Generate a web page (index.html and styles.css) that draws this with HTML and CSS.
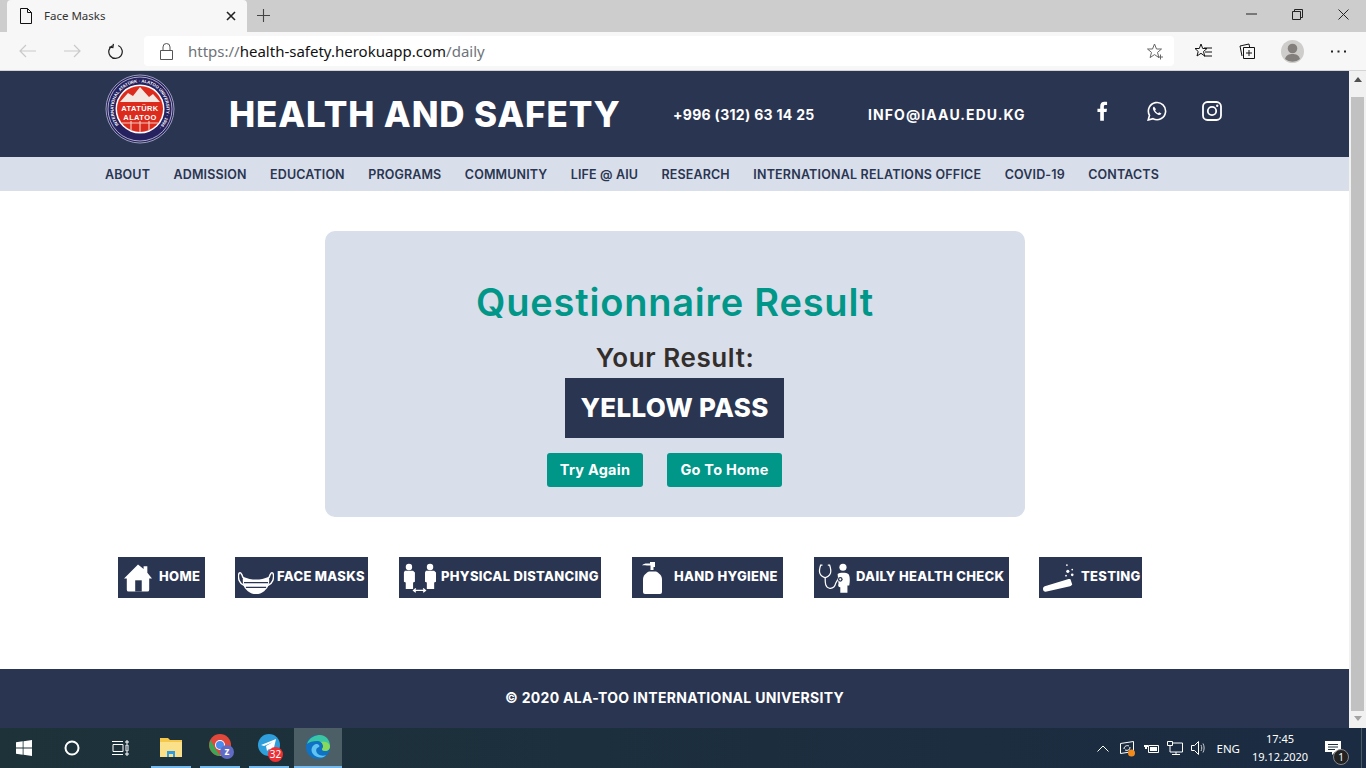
FILE: index.html
```html
<!DOCTYPE html>
<html lang="en">

<head>
  <meta charset="UTF-8">
  <title>Face Masks</title>
  <link rel="stylesheet" href="styles.css">
</head>

<body>
  <!-- browser frame -->
  <div class="tabstrip">
    <div class="tab">
      <svg class="tab-doc" width="14" height="16" viewBox="0 0 14 16"><path d="M1.5.5h7l4 4v11h-11zM8.5.5v4h4" fill="none" stroke="#111" stroke-width="1"/></svg>
      <span class="tab-title">Face Masks</span>
      <svg class="tab-x" width="10" height="10" viewBox="0 0 10 10"><path d="M1 1l8 8M9 1l-8 8" stroke="#222" stroke-width="1.6"/></svg>
    </div>
    <svg class="tab-new" width="13" height="13" viewBox="0 0 13 13"><path d="M6.500 0v13M0 6.500h13" stroke="#444" stroke-width="1.1"/></svg>
    <div class="win-btns">
      <svg width="11" height="2" viewBox="0 0 11 2"><path d="M0 1h11" stroke="#222" stroke-width="1"/></svg>
      <svg width="11" height="11" viewBox="0 0 11 11"><path d="M.5 2.500h8v8h-8zM2.500 2.500v-2h8v8h-2" fill="none" stroke="#222" stroke-width="1"/></svg>
      <svg width="11" height="11" viewBox="0 0 11 11"><path d="M.5.5l10 10M10.500.5l-10 10" stroke="#222" stroke-width="1"/></svg>
    </div>
  </div>
  <div class="toolbar">
    <svg class="nav-back" width="18" height="14" viewBox="0 0 18 14"><path d="M17 7H1M7 1L1 7l6 6" fill="none" stroke="#c9c9c9" stroke-width="1.2"/></svg>
    <svg class="nav-fwd" width="18" height="14" viewBox="0 0 18 14"><path d="M1 7h16M11 1l6 6-6 6" fill="none" stroke="#c9c9c9" stroke-width="1.2"/></svg>
    <svg class="nav-reload" width="16" height="17" viewBox="0 0 18 18"><path d="M11.500 2.300A7.600 7.600 0 1 1 5.200 2.400" fill="none" stroke="#222" stroke-width="1.400"/><path d="M5.700.2v4.400H1.600" fill="none" stroke="#222" stroke-width="1.400" transform="rotate(8 5 3)"/></svg>
    <div class="addressbar">
      <svg class="lock" width="13" height="17" viewBox="0 0 13 17"><path d="M.5 7.500h12v9H.5zM3 7.500V4a3.500 3.500 0 0 1 7 0v3.500" fill="none" stroke="#555" stroke-width="1"/></svg>
      <span class="url"><span class="url-dim">https://</span>health-safety.herokuapp.com<span class="url-dim">/daily</span></span>
      <svg class="star" width="17" height="17" viewBox="0 0 17 17"><path d="M7.500 1l2 5h5l-4 3.400 1.400 5.200-4.400-3-4.400 3L4.500 9.400.5 6h5z" fill="none" stroke="#666" stroke-width="1"/><path d="M13.500 11.500v5M11 14h5" stroke="#666" stroke-width="1"/></svg>
    </div>
    <svg class="tool-fav" width="19" height="17" viewBox="0 0 19 17"><path d="M7 1l1.700 4.500H13L9.500 8.500l1.200 4.500L7 10.300 3 13l1.200-4.500L1 5.500h4.300z" fill="none" stroke="#111" stroke-width="1"/><path d="M10 5h8M11 9h7M10 13h8" stroke="#111" stroke-width="1"/></svg>
    <svg class="tool-coll" width="16" height="17" viewBox="0 0 16 17"><path d="M3 13L1 3l9-2 .6 3" fill="none" stroke="#111" stroke-width="1"/><path d="M4.500 4.500h11v11h-11zM10 7v6M7 10h6" fill="none" stroke="#111" stroke-width="1"/></svg>
    <svg class="tool-user" width="23" height="23" viewBox="0 0 23 23"><circle cx="11.500" cy="11.500" r="11.500" fill="#cfcdcb"/><circle cx="11.500" cy="8.500" r="4.800" fill="#837f7c"/><path d="M4 19c1-4 4-5 7.500-5s6.500 1 7.500 5a11.500 11.500 0 0 1-15 0z" fill="#837f7c"/></svg>
    <svg class="tool-more" width="15" height="3" viewBox="0 0 15 3"><path d="M0 .5h2v2H0zM6.500 .5h2v2h-2zM13 .5h2v2h-2z" fill="#222"/></svg>
  </div>

  <div class="viewport">
    <div class="page">
      <header class="site-head">
        <svg class="logo" width="70" height="70" viewBox="0 0 70 70">
          <circle cx="35" cy="35" r="34" fill="#26215f" stroke="#b9bdd6" stroke-width=".8"/>
          <circle cx="35" cy="35" r="32" fill="none" stroke="#e8e8f0" stroke-width=".7"/>
          <circle cx="35" cy="35" r="24.500" fill="#fff"/>
          <circle cx="35" cy="35" r="23" fill="#dc2a1c"/>
          <path d="M15 28l8-9 5 3 7-9 9 10 4-3 7 8z" fill="#f4e6e0"/>
          <path d="M17 49h36M35 47v11M26 47v9M44 47v9" stroke="#f2c9bf" stroke-width="1.200"/>
          <defs><path id="ring" d="M35 35m-26.500 0a26.500 26.500 0 1 1 53 0a26.500 26.500 0 1 1-53 0" transform="rotate(-40 35 35)"/></defs>
          <text class="logo-ring"><textPath href="#ring" startOffset="1%">INTERNATIONAL ATATÜRK · ALATOO UNIVERSITY · 1996 ·</textPath></text>
          <text class="logo-word" x="35" y="37">ATATÜRK</text>
          <text class="logo-word" x="35" y="46">ALATOO</text>
        </svg>
        <span class="site-title">HEALTH AND SAFETY</span>
        <span class="site-phone">+996 (312) 63 14 25</span>
        <span class="site-mail">INFO@IAAU.EDU.KG</span>
        <div class="socials">
          <svg class="soc-fb" width="11" height="20" viewBox="0 0 12 21"><path d="M3.500 21v-9.500H.5V8h3V5.300C3.500 2 5.400.5 8 .5c1.300 0 2.500.1 3 .2v3.200H9.200C7.800 3.900 7.500 4.600 7.500 5.600V8h3.400l-.5 3.500H7.500V21z" fill="#fff"/></svg>
          <svg width="20" height="20" viewBox="0 0 20 20"><path d="M1.200 19l1.300-4.700A8.600 8.600 0 1 1 6 17.700z" fill="none" stroke="#fff" stroke-width="1.600"/><path d="M7 5.500c-.7.400-1.400 1.300-1 2.800.6 2.300 3.200 5 5.600 5.600 1.400.3 2.500-.3 2.800-1.300l-2.300-1.400-1 1c-1.300-.5-2.500-1.700-3-3l.9-1z" fill="#fff"/></svg>
          <svg width="20" height="20" viewBox="0 0 20 20"><rect x="1" y="1" width="18" height="18" rx="4.500" fill="none" stroke="#fff" stroke-width="1.800"/><circle cx="10" cy="10" r="4.200" fill="none" stroke="#fff" stroke-width="1.800"/><circle cx="15.200" cy="4.800" r="1.200" fill="#fff"/></svg>
        </div>
      </header>
      <nav class="site-nav">
        <a>ABOUT</a>
        <a>ADMISSION</a>
        <a>EDUCATION</a>
        <a>PROGRAMS</a>
        <a>COMMUNITY</a>
        <a>LIFE @ AIU</a>
        <a>RESEARCH</a>
        <a class="nav-long">INTERNATIONAL RELATIONS OFFICE</a>
        <a>COVID-19</a>
        <a>CONTACTS</a>
      </nav>

      <main class="content">
        <section class="result-card">
          <h1>Questionnaire Result</h1>
          <h2>Your Result:</h2>
          <div class="pass">YELLOW PASS</div>
          <div class="actions">
            <a class="btn btn-try">Try Again</a>
            <a class="btn btn-home">Go To Home</a>
          </div>
        </section>

        <div class="topics">
          <a class="topic t-home">
            <svg width="28" height="29" viewBox="0 0 30 30"><path d="M15 1l6 5V3h4v7l5 6h-3v12a2 2 0 0 1-2 2H5a2 2 0 0 1-2-2V16H0z" fill="#fff"/><path d="M12 18h7v12h-7z" fill="#2a3551"/></svg>
            <span>HOME</span>
          </a>
          <a class="topic t-mask">
            <svg width="36" height="25" viewBox="0 4 37 26"><path d="M5 12C2 2-1 8 1 15c1 3 3 4 5 5M32 12c3-10 6-4 4 3-1 3-3 4-5 5" fill="none" stroke="#fff" stroke-width="1.500"/><path d="M5 11c5 2 9 3 13.500 3S27 13 32 11c1 8-1 12-5 15-3 2-5 3-8.500 3s-5.500-1-8.500-3c-4-3-6-7-5-15z" fill="#fff"/><path d="M6 17h25M8 22h21" stroke="#2a3551" stroke-width="1.300"/></svg>
            <span>FACE MASKS</span>
          </a>
          <a class="topic t-dist">
            <svg width="33" height="30" viewBox="0 0 36 32"><circle cx="6.500" cy="4" r="3.500" fill="#fff"/><path d="M2 8h9l2 2v10l-2 1v7H3v-7l-2-1V10z" fill="#fff"/><circle cx="29.500" cy="4" r="3.500" fill="#fff"/><path d="M25 8h9l2 2v10l-2 1v7h-8v-7l-2-1V10z" fill="#fff"/><path d="M12 29.500h12M14 27.500l-2.500 2 2.500 2M22 27.500l2.500 2-2.500 2" fill="none" stroke="#fff" stroke-width="1.400"/></svg>
            <span>PHYSICAL DISTANCING</span>
          </a>
          <a class="topic t-hand">
            <svg width="21" height="32" viewBox="0 0 21 32"><path d="M0 3.500c1-1.500 3-2 5-2h3V0h5v5h-1.500v3h-3V3.500H5C3 3.500 1 3 0 3.500z" fill="#fff"/><path d="M7 9.500h7c3 1.500 6 4 6 8V30a2 2 0 0 1-2 2H3a2 2 0 0 1-2-2V17.500c0-4 3-6.500 6-8z" fill="#fff"/></svg>
            <span>HAND HYGIENE</span>
          </a>
          <a class="topic t-daily">
            <svg width="33" height="30" viewBox="0 0 37 33"><path d="M5 2H3c-1 3-2 6-1 9 1 3 4 5 6 5s5-2 6-5c1-3 0-6-1-9h-2" fill="none" stroke="#fff" stroke-width="1.400"/><path d="M8 16c0 6 0 11 5 12 4 .5 6-2 7-6l3-5" fill="none" stroke="#fff" stroke-width="1.400"/><circle cx="28" cy="4.500" r="4" fill="#fff"/><path d="M22 12c2-2 10-2 12 0 2 2 2 8 1 13h-2v8h-8v-6c-2 0-3-2-2-4z" fill="#fff"/><circle cx="25" cy="18" r="2.600" fill="#2a3551"/><circle cx="25" cy="18" r="1.200" fill="#fff"/></svg>
            <span>DAILY HEALTH CHECK</span>
          </a>
          <a class="topic t-test">
            <svg width="31" height="31" viewBox="0 0 35 32"><path d="M3 32c-3.500 0-4-5-1-6l26-8c1-.5 2-.5 3 0l2 6c-.5 1-1.500 1.500-2.500 2z" fill="#fff"/><circle cx="27" cy="2" r="1" fill="#fff"/><circle cx="28" cy="9" r="1.800" fill="#fff"/><circle cx="33" cy="7" r="1" fill="#fff"/><circle cx="33" cy="13" r="1.500" fill="#fff"/><circle cx="26" cy="14" r="1" fill="#fff"/></svg>
            <span>TESTING</span>
          </a>
        </div>
      </main>

      <footer class="site-foot">© 2020 ALA-TOO INTERNATIONAL UNIVERSITY</footer>
    </div>
    <div class="scrollbar">
      <span class="arrow-up"></span>
      <span class="thumb"></span>
      <span class="arrow-down"></span>
    </div>
  </div>

  <!-- windows taskbar -->
  <div class="taskbar">
    <svg class="tb-win" width="16" height="16" viewBox="0 0 16 16"><path d="M0 2.300l6.700-1v6.300H0zM7.500 1.200L16 0v7.600H7.500zM0 8.400h6.700v6.300L0 13.700zM7.500 8.400H16V16l-8.500-1.200z" fill="#fff"/></svg>
    <svg class="tb-search" width="16" height="16" viewBox="0 0 16 16"><circle cx="8" cy="8" r="6.500" fill="none" stroke="#fff" stroke-width="2"/></svg>
    <svg class="tb-view" width="17" height="16" viewBox="0 0 17 16"><path d="M1 4.500h10v7H1zM0 1.500h11M0 14.500h11M14 1h2v2h-2zM14 5h2v6h-2zM14 13h2v2h-2z" fill="none" stroke="#fff" stroke-width="1"/></svg>
    <div class="tb-app">
      <svg width="22" height="20" viewBox="0 0 22 20"><path d="M0 1h8l2 2h12v17H0z" fill="#f5c84c"/><path d="M0 5h22v15H0z" fill="#fbe08a"/><path d="M7 14h8v6h-2v-3H9v3H7z" fill="#2f9be0"/></svg>
    </div>
    <div class="tb-app">
      <svg class="tb-shift" width="26" height="26" viewBox="0 0 26 26"><circle cx="11" cy="11" r="11" fill="#e0483b"/><path d="M1.500 6l5 9 5 7a11 11 0 0 1-10-16z" fill="#3aa757"/><path d="M11 22l5-9h5a11 11 0 0 1-10 9z" fill="#f6c026"/><circle cx="11" cy="11" r="5" fill="#fff"/><circle cx="11" cy="11" r="4" fill="#4a8cf0"/><circle cx="18" cy="18" r="7" fill="#5f6bc4"/><text class="tb-z" x="18" y="21">z</text></svg>
    </div>
    <div class="tb-app">
      <svg class="tb-shift" width="26" height="26" viewBox="0 0 26 26"><circle cx="11" cy="11" r="11" fill="#2f9fdc"/><path d="M3 11l15-6-3 13-4-3-2 2-1-5 7-4-9 4z" fill="#fff"/></svg>
      <span class="tb-badge">32</span>
    </div>
    <div class="tb-app tb-active">
      <svg width="24" height="24" viewBox="0 0 24 24"><circle cx="12" cy="12" r="12" fill="#0f72c4"/><path d="M1 9C3 2 10 0 14 0c6 0 10 5 10 11 0 3-2 5-5 5-2 0-3-1-3-2 1-1 1-2 1-3 0-3-3-5-6-5-4 0-8 1-10 3z" fill="#39c6a5"/><path d="M24 11c0 3-2 5-5 5-2 0-3-1-3-2 1-1 1-2 1-3 0-2-1-3-2-4 4-1 8 0 9 4z" fill="#86d95a"/><path d="M7 19c-3-4-1-9 3-10 3 0 4 2 3 3-3 1-4 4-1 7 2 2 6 2 8 1-3 4-10 3-13-1z" fill="#5fc4f0"/></svg>
    </div>
    <div class="tray">
      <svg class="tr-chev" width="12" height="7" viewBox="0 0 12 7"><path d="M.5 6.500L6 1l5.500 5.500" fill="none" stroke="#fff" stroke-width="1"/></svg>
      <svg class="tr-sync" width="17" height="17" viewBox="0 0 17 17"><path d="M1.500 3.500l13-2v10l-13 2z" fill="none" stroke="#fff" stroke-width="1"/><path d="M5 9c0-3 3-4 5-3M11 7c0 3-2 4-5 3" fill="none" stroke="#fff" stroke-width="1"/><circle cx="12.500" cy="13" r="3.500" fill="#f28a1e"/></svg>
      <svg class="tr-batt" width="17" height="12" viewBox="0 0 17 12"><path d="M5.500 3.500h10v7h-10z" fill="none" stroke="#fff" stroke-width="1"/><path d="M7 5h7v4H7zM2 0v3M4 0v3M1 3h4v2H4v2H2V5H1z" fill="#fff"/></svg>
      <svg class="tr-net" width="16" height="14" viewBox="0 0 16 14"><path d="M.5 4.500V.5h5v4zM5.500 2h10v9H3V4.500M9 11v2.500M5 13.500h8" fill="none" stroke="#fff" stroke-width="1"/></svg>
      <svg class="tr-vol" width="15" height="14" viewBox="0 0 15 14"><path d="M.5 4.500h3l4-4v13l-4-4h-3z" fill="none" stroke="#fff" stroke-width="1"/><path d="M10 4c1 2 1 4 0 6M12 2.500c1.500 3 1.500 6 0 9" fill="none" stroke="#ccc" stroke-width="1"/></svg>
      <span class="tr-lang">ENG</span>
      <div class="tr-clock"><span>17:45</span><span>19.12.2020</span></div>
      <div class="tr-notif">
        <svg width="16" height="14" viewBox="0 0 16 14"><path d="M0 0h16v11h-6l-3 3v-3H0z" fill="#fff"/><path d="M3 3.500h10M3 6h10M3 8.500h7" stroke="#1c2f3c" stroke-width="1"/></svg>
        <span class="tr-count">1</span>
      </div>
      <span class="show-desktop"></span>
    </div>
  </div>
</body>

</html>
```

FILE: styles.css
```css
* {
  box-sizing: border-box;
}

html,
body {
  margin: 0;
  height: 768px;
  overflow: hidden;
}

body {
  display: flex;
  flex-direction: column;
  font-family: "Inter", "Liberation Sans", sans-serif;
  background: #fff;
}

svg {
  display: block;
  flex: none;
}

/* browser frame */
.tabstrip {
  height: 32px;
  display: flex;
  align-items: flex-start;
  padding-left: 7px;
  background: #cdcdcd;
}

.tab {
  width: 240px;
  height: 32px;
  display: flex;
  align-items: center;
  padding: 0 11px 0 12px;
  border-radius: 4px 4px 0 0;
  background: #f7f7f7;
}

.tab-title {
  flex: 1;
  margin: -1px 0 0 11px;
  color: #333;
  font: 11.5px "Noto Sans", sans-serif;
}

.tab-new {
  margin: 9px 0 0 10px;
}

.win-btns {
  width: 120px;
  height: 28px;
  margin-left: auto;
  display: flex;
  align-items: center;
  gap: 35px;
}

.toolbar {
  height: 39px;
  display: flex;
  align-items: center;
  background: #f7f7f7;
  border-bottom: 1px solid #d4d4d4;
}

.nav-back {
  margin-left: 19px;
}

.nav-fwd {
  margin-left: 26px;
}

.nav-reload {
  margin-left: 27px;
}

.addressbar {
  width: 1030px;
  height: 30px;
  margin-left: 20px;
  display: flex;
  align-items: center;
  padding: 0 10px 0 16px;
  border-radius: 4px;
  background: #fff;
}

.url {
  flex: 1;
  margin-left: 15px;
  color: #111;
  font: 15px "Noto Sans", sans-serif;
}

.url-dim {
  color: #6e7479;
}

.tool-fav {
  margin-left: 20px;
}

.tool-coll {
  margin-left: 26px;
}

.tool-user {
  margin-left: 26px;
}

.tool-more {
  margin-left: 27px;
}

.viewport {
  flex: 1;
  min-height: 0;
  display: flex;
}

.page {
  flex: 1;
  min-width: 0;
  display: flex;
  flex-direction: column;
}

.scrollbar {
  width: 17px;
  display: flex;
  flex-direction: column;
  align-items: center;
  background: #f1f1f1;
}

.arrow-up {
  margin-top: 6px;
  border: 4px solid transparent;
  border-top: 0;
  border-bottom: 5px solid #505050;
}

.thumb {
  width: 13px;
  height: 614px;
  margin-top: 15px;
  background: #c1c1c1;
}

.arrow-down {
  margin-top: 5px;
  border: 4px solid transparent;
  border-bottom: 0;
  border-top: 5px solid #a3a3a3;
}

/* site header */
.site-head {
  height: 86px;
  display: flex;
  align-items: flex-start;
  padding-left: 105px;
  color: #fff;
  background: #2a3551;
}

.logo {
  margin-top: 3px;
}

.logo-ring {
  fill: #fff;
  font: 700 4.3px "Liberation Sans", sans-serif;
}

.logo-word {
  fill: #fff;
  text-anchor: middle;
  letter-spacing: .4px;
  font: 700 7.5px "Liberation Sans", sans-serif;
}

.site-title {
  width: 444px;
  margin: 21px 0 0 54px;
  font-size: 35px;
  line-height: 44px;
  font-weight: 800;
  letter-spacing: .88px;
  white-space: nowrap;
}

.site-phone {
  width: 195px;
  margin-top: 34px;
  font-size: 14px;
  line-height: 20px;
  font-weight: 700;
  letter-spacing: .3px;
}

.site-mail {
  width: 226px;
  margin-top: 34px;
  font-size: 14px;
  line-height: 20px;
  font-weight: 700;
  letter-spacing: 1.1px;
}

.socials {
  display: flex;
  align-items: center;
  gap: 35px;
  margin-top: 30px;
  padding-left: 3px;
}

.soc-fb {
  margin-right: 4px;
}

.site-nav {
  height: 34px;
  display: flex;
  align-items: center;
  gap: 23.5px;
  padding-left: 105px;
  color: #2a3551;
  background: #d8deea;
  font-size: 12.5px;
  font-weight: 600;
  letter-spacing: .125px;
  white-space: nowrap;
}

.nav-long {
  letter-spacing: .2px;
}

/* main */
.content {
  flex: 1;
  min-height: 0;
  padding-top: 40px;
}

.result-card {
  width: 700px;
  height: 286px;
  margin-left: 325px;
  padding-top: 47px;
  display: flex;
  flex-direction: column;
  align-items: center;
  border-radius: 10px;
  background: #d8deea;
}

.result-card h1 {
  margin: 0;
  color: #009688;
  font-size: 38px;
  line-height: 48px;
  font-weight: 600;
  letter-spacing: .8px;
}

.result-card h2 {
  margin: 14px 0 0;
  color: #332e2b;
  font-size: 26px;
  line-height: 36px;
  font-weight: 600;
  letter-spacing: .6px;
}

.pass {
  width: 219px;
  height: 60px;
  margin: 2px 1px 0 0;
  display: flex;
  align-items: center;
  justify-content: center;
  padding-bottom: 2px;
  color: #fff;
  background: #2a3551;
  font-size: 26px;
  font-weight: 800;
  letter-spacing: .3px;
}

.actions {
  display: flex;
  gap: 24px;
  margin: 15px 21px 0 0;
}

.btn {
  height: 34px;
  display: flex;
  align-items: center;
  justify-content: center;
  padding-bottom: 2px;
  border-radius: 3px;
  color: #fff;
  background: #009688;
  font-size: 14.5px;
  font-weight: 700;
  letter-spacing: .25px;
}

.btn-try {
  width: 96px;
}

.btn-home {
  width: 115px;
}

.topics {
  display: flex;
  gap: 31px;
  margin-top: 40px;
  padding-left: 118px;
}

.topic {
  height: 41px;
  display: flex;
  align-items: center;
  color: #fff;
  background: #2a3551;
  font-size: 13px;
  font-weight: 800;
  letter-spacing: .3px;
  white-space: nowrap;
}

.topic span {
  margin-bottom: 4px;
}

.t-home {
  width: 87px;
  padding-left: 6px;
  gap: 7px;
}

.t-mask {
  width: 133px;
  margin-left: -1px;
  padding-left: 3px;
  gap: 3px;
}

.t-mask svg {
  margin-top: 10px;
}

.t-dist {
  width: 202px;
  padding-left: 4px;
  gap: 5px;
}

.t-hand {
  width: 151px;
  padding-left: 10px;
  gap: 11px;
}

.t-daily {
  width: 195px;
  padding-left: 4px;
  gap: 5px;
}

.t-test {
  width: 103px;
  margin-left: -1px;
  padding-left: 4px;
  gap: 7px;
}

.site-foot {
  height: 59px;
  display: flex;
  align-items: center;
  justify-content: center;
  padding-bottom: 2px;
  color: #fff;
  background: #2a3551;
  font-size: 14px;
  font-weight: 700;
  letter-spacing: .3px;
}

/* taskbar */
.taskbar {
  height: 40px;
  display: flex;
  align-items: center;
  color: #fff;
  background: linear-gradient(90deg, #1d3239, #1b2b42);
  font-family: "Noto Sans", sans-serif;
}

.tb-win {
  margin-left: 16px;
}

.tb-search {
  margin-left: 32px;
}

.tb-view {
  margin-left: 32px;
  margin-right: 22px;
}

.tb-app {
  position: relative;
  width: 40px;
  height: 40px;
  margin-right: 9px;
  display: flex;
  align-items: center;
  justify-content: center;
  border-bottom: 2px solid #76b9ed;
}

.tb-shift {
  margin-left: 4px;
}

.tb-active {
  width: 48px;
  margin-left: -4px;
  background: #4c5f66;
}

.tb-z {
  fill: #fff;
  text-anchor: middle;
  font: 700 10px "Noto Sans", sans-serif;
}

.tb-badge {
  position: absolute;
  right: 6px;
  bottom: 4px;
  width: 15px;
  height: 15px;
  border-radius: 50%;
  color: #fff;
  background: #ee3034;
  font-size: 10px;
  line-height: 15px;
  text-align: center;
}

.tray {
  height: 40px;
  margin-left: auto;
  display: flex;
  align-items: center;
}

.tr-sync {
  margin-left: 10px;
}

.tr-batt {
  margin-left: 7px;
}

.tr-net {
  margin-left: 7px;
}

.tr-vol {
  margin-left: 8px;
}

.tr-lang {
  margin-left: 10px;
  font-size: 11.5px;
}

.tr-clock {
  width: 60px;
  margin-left: 10px;
  display: flex;
  flex-direction: column;
  align-items: center;
  font-size: 11px;
  line-height: 18px;
}

.tr-notif {
  position: relative;
  margin-left: 15px;
}

.tr-count {
  position: absolute;
  right: -8px;
  top: 8px;
  width: 16px;
  height: 16px;
  border-radius: 50%;
  border: 1px solid #888;
  background: #222;
  font-size: 10px;
  line-height: 14px;
  text-align: center;
}

.show-desktop {
  width: 5px;
  height: 40px;
  margin-left: 20px;
  border-left: 1px solid #4a5a66;
}
```
